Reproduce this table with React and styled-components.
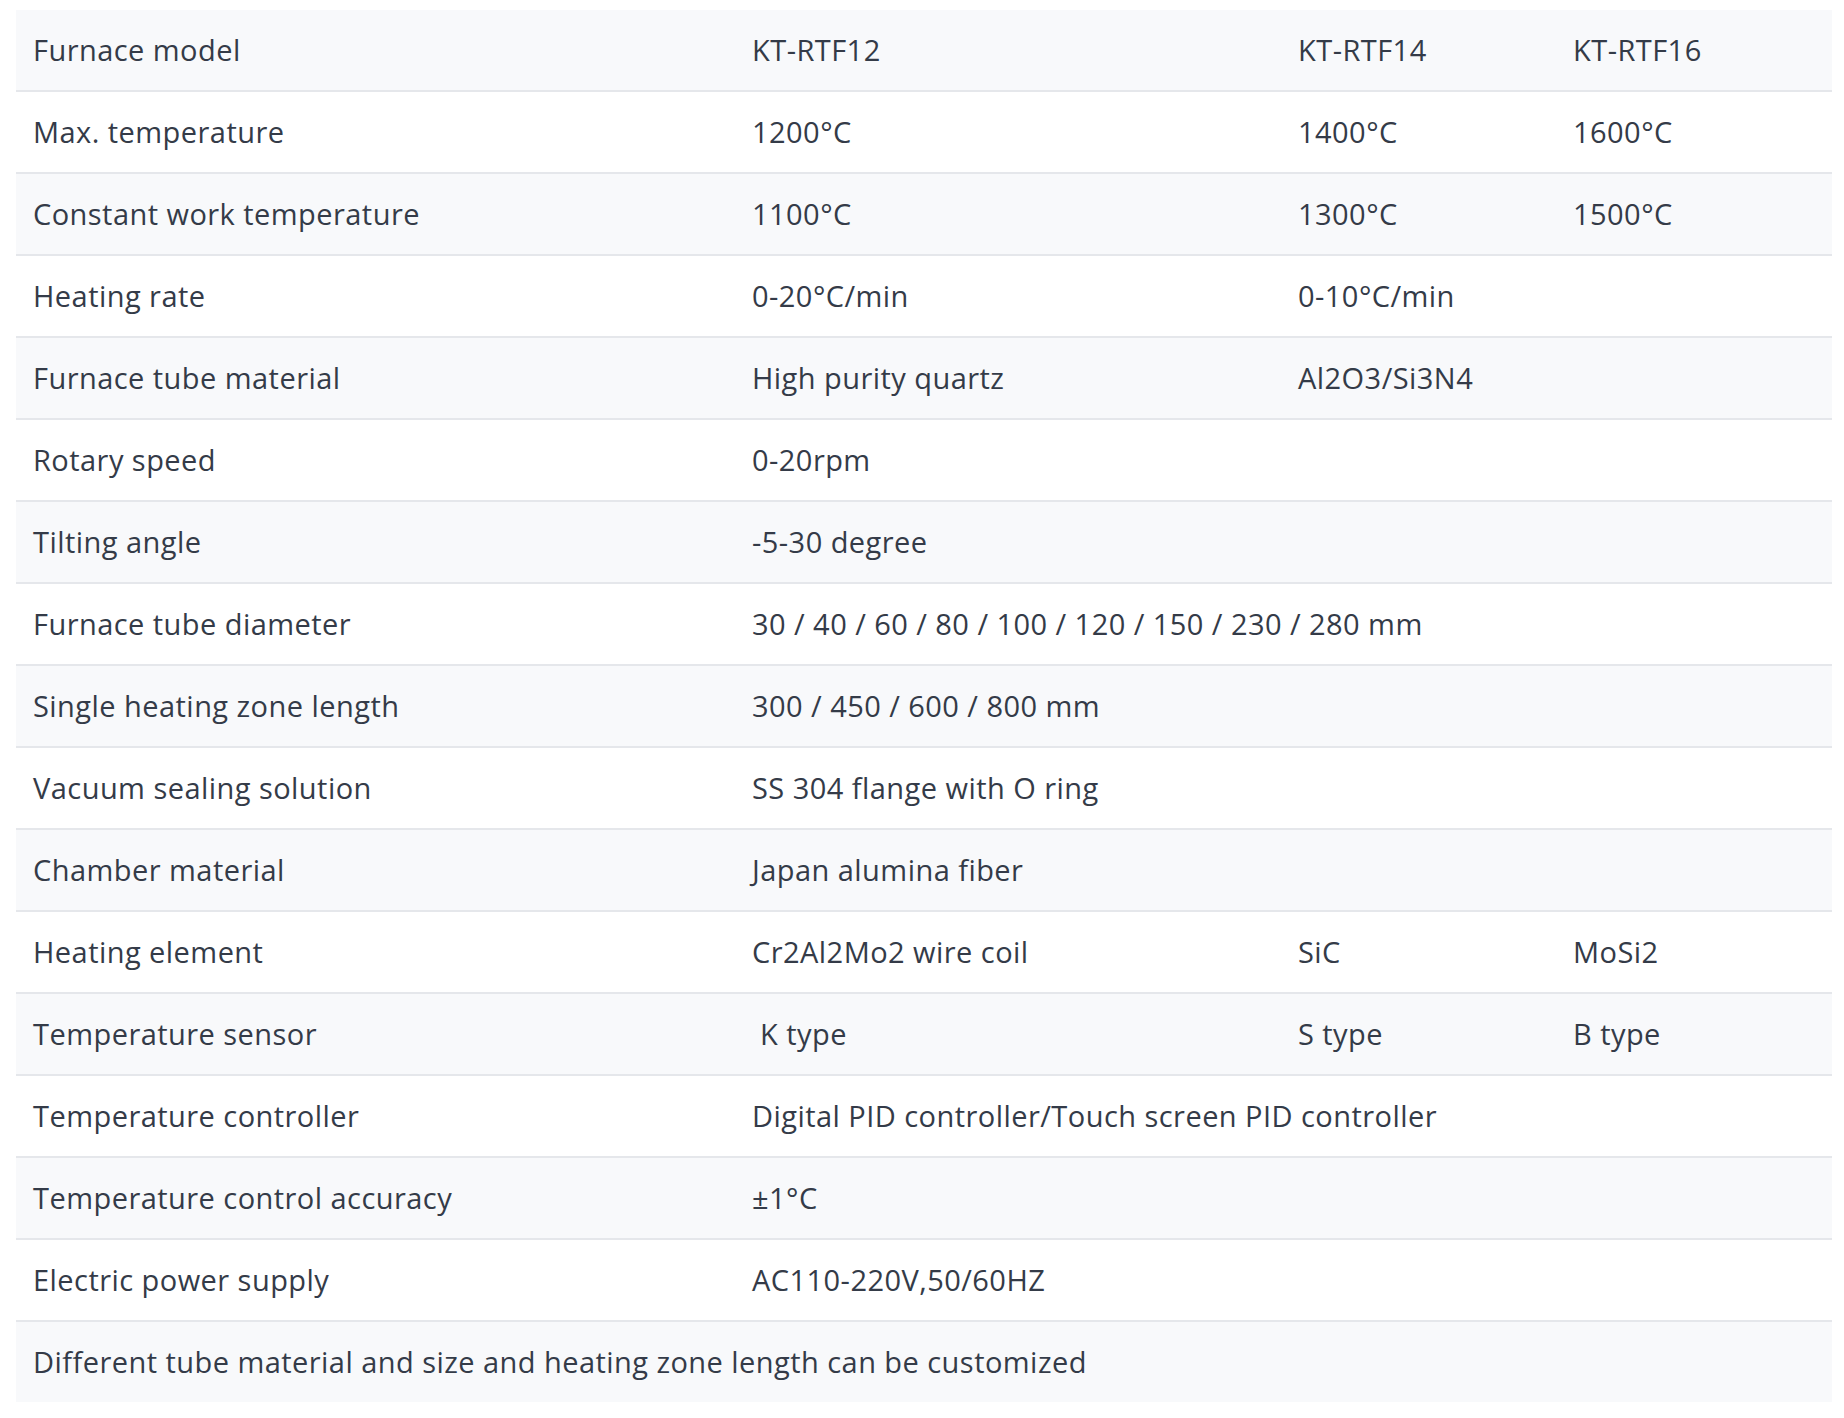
import React from "react";
import styled, { createGlobalStyle } from "styled-components";

const Global = createGlobalStyle`
  html, body { margin: 0; padding: 0; background: #ffffff; }
  body { font-family: "Open Sans", "Liberation Sans", sans-serif; }
`;

const Page = styled.div`
  padding: 10px 12px 16px 16px;
`;

const SpecTable = styled.div`
  width: 1816px;
  display: flex;
  flex-direction: column;
  font-family: "Open Sans", "Liberation Sans", sans-serif;
  font-size: 29px;
  letter-spacing: 0.45px;
  color: #343b48;
`;

const Row = styled.div`
  display: grid;
  grid-template-columns: 719px 546px 275px 276px;
  height: 80px;
  background: ${(p) => (p.$shaded ? "#f8f9fb" : "#ffffff")};
  border-bottom: ${(p) => (p.$last ? "none" : "2px solid #e5e7eb")};
`;

const Cell = styled.div`
  grid-column: span ${(p) => p.$span || 1};
  display: flex;
  align-items: center;
  padding: 0 16px 2px 17px;
  white-space: nowrap;
  line-height: 1;
`;

const rows = [
  ["Furnace model", "KT-RTF12", "KT-RTF14", "KT-RTF16"],
  ["Max. temperature", "1200°C", "1400°C", "1600°C"],
  ["Constant work temperature", "1100°C", "1300°C", "1500°C"],
  ["Heating rate", "0-20°C/min", { text: "0-10°C/min", span: 2 }],
  ["Furnace tube material", "High purity quartz", { text: "Al2O3/Si3N4", span: 2 }],
  ["Rotary speed", { text: "0-20rpm", span: 3 }],
  ["Tilting angle", { text: "-5-30 degree", span: 3 }],
  ["Furnace tube diameter", { text: "30 / 40 / 60 / 80 / 100 / 120 / 150 / 230 / 280 mm", span: 3 }],
  ["Single heating zone length", { text: "300 / 450 / 600 / 800 mm", span: 3 }],
  ["Vacuum sealing solution", { text: "SS 304 flange with O ring", span: 3 }],
  ["Chamber material", { text: "Japan alumina fiber", span: 3 }],
  ["Heating element", "Cr2Al2Mo2 wire coil", "SiC", "MoSi2"],
  ["Temperature sensor", "\u00a0K type", "S type", "B type"],
  ["Temperature controller", { text: "Digital PID controller/Touch screen PID controller", span: 3 }],
  ["Temperature control accuracy", { text: "±1°C", span: 3 }],
  ["Electric power supply", { text: "AC110-220V,50/60HZ", span: 3 }],
  [{ text: "Different tube material and size and heating zone length can be customized", span: 4 }],
];

export default function App() {
  return (
    <Page>
      <Global />
      <SpecTable>
        {rows.map((r, i) => (
          <Row key={i} $shaded={i % 2 === 0} $last={i === rows.length - 1}>
            {r.map((c, j) =>
              typeof c === "string" ? (
                <Cell key={j}>{c}</Cell>
              ) : (
                <Cell key={j} $span={c.span}>
                  {c.text}
                </Cell>
              )
            )}
          </Row>
        ))}
      </SpecTable>
    </Page>
  );
}
